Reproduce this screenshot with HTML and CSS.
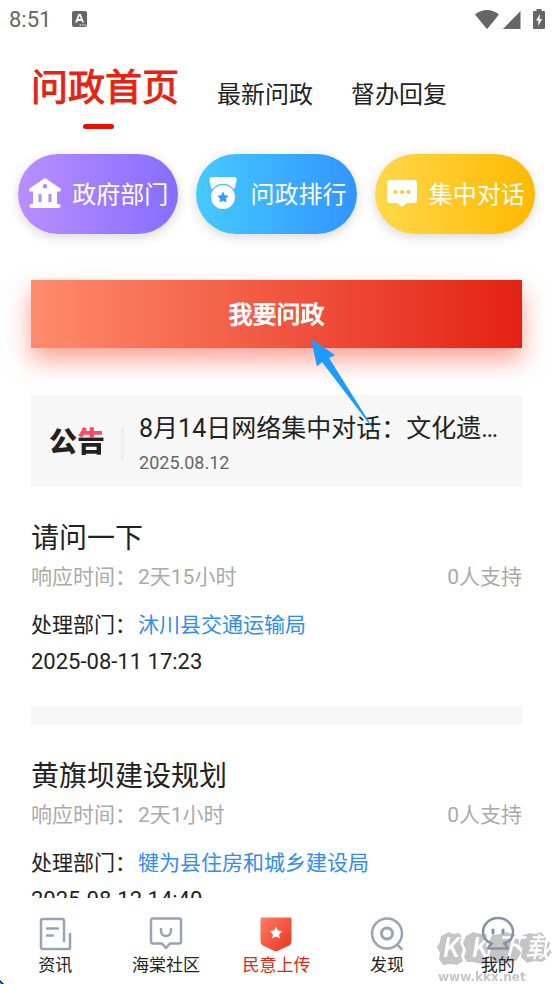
FILE: index.html
```html
<!DOCTYPE html>
<html lang="zh-CN">
<head>
<meta charset="utf-8">
<meta name="viewport" content="width=device-width, initial-scale=1">
<title>问政首页</title>
<link rel="stylesheet" href="styles.css">
</head>
<body>
<div class="app">
  <header class="status">
    <span class="clock">8:51</span>
    <svg class="status-app" width="15" height="16" viewBox="0 0 15 16"><rect width="15" height="16" rx="2" fill="#666"/><path d="M4 11.500 7 4h1.200l3 7.500M5 9h5" fill="none" stroke="#fff" stroke-width="1.800"/><path d="M7.500 14h1.500M10 14h1.500M12.500 14H14" stroke="#fff" stroke-width="1"/></svg>
    <span class="status-icons">
      <svg width="24" height="19" viewBox="0 0 24 19"><path d="M0 4.500C7-1.500 17-1.500 24 4.500L12.600 18.500Q12 19 11.400 18.500Z" fill="#666"/></svg>
      <svg width="18" height="19" viewBox="0 0 18 19"><path d="M17.500 1v18H0z" fill="#666"/></svg>
      <svg class="battery" width="12" height="20" viewBox="0 0 12 20"><path d="M3.500 0h5v2H11q1 0 1 1v16q0 1-1 1H1q-1 0-1-1V3q0-1 1-1h2.500z" fill="#666"/><path d="M7 5 3 11.500h2.500L5 17l4.200-7H6.600z" fill="#fff"/></svg>
    </span>
  </header>

  <nav class="tabs">
    <a class="tab tab-active" href="#home">问政首页</a>
    <a class="tab" href="#latest">最新问政</a>
    <a class="tab" href="#replies">督办回复</a>
  </nav>

  <main class="content">
    <div class="pills">
      <button class="pill pill-purple" type="button">
        <svg width="34" height="32" viewBox="0 0 34 32"><path fill="#fff" fill-rule="evenodd" d="M17 1 32.500 11.500Q34 13 32 14.500H29V27h2q1.500 0 1.500 2t-1.500 2H3q-1.500 0-1.500-2T3 27h2V14.500H2Q0 13 1.500 11.500ZM17 7a2.200 2.200 0 1 0 0 4.400A2.200 2.200 0 0 0 17 7ZM10.500 17v8h3v-8ZM20.500 17v8h3v-8Z"/></svg>
        <span>政府部门</span>
      </button>
      <button class="pill pill-blue" type="button">
        <svg width="34" height="34" viewBox="0 0 34 34"><path fill="#fff" d="M6 1h22q3 0 2.600 3l-1.700 7.500q-.4 1-1.400 1.500C22 6 12 6 6.500 13Q5.300 12.500 5 11.500L3.400 4Q3 1 6 1Z"/><circle cx="17" cy="21" r="12" fill="#fff"/><path fill="#359dff" d="m17 15.500 1.800 3.700 4 .6-2.900 2.800.7 4-3.600-1.900-3.600 1.900.7-4-2.900-2.800 4-.6z"/></svg>
        <span>问政排行</span>
      </button>
      <button class="pill pill-yellow" type="button">
        <svg width="34" height="30" viewBox="0 0 34 30"><path fill="#fff" d="M5 2h24q3 0 3 3v17q0 3-3 3h-7l-5 4-5-4H5q-3 0-3-3V5q0-3 3-3Z"/><g fill="#ffc925"><circle cx="10.500" cy="14" r="2"/><circle cx="17" cy="14" r="2"/><circle cx="23.500" cy="14" r="2"/></g></svg>
        <span>集中对话</span>
      </button>
    </div>

    <div class="ask">
      <button class="ask-button" type="button">我要问政</button>
      <svg class="pointer" width="66" height="96" viewBox="0 0 66 96"><path d="M0 0 24 16 18 19 65.500 94.500 11 23 6 27.500Z" fill="#1e9bff"/></svg>
    </div>

    <a class="notice" href="#notice">
      <strong class="notice-logo">公<span>告</span></strong>
      <span class="notice-body">
        <span class="notice-title">8月14日网络集中对话：文化遗产保护</span>
        <time class="notice-date">2025.08.12</time>
      </span>
    </a>

    <article class="item">
      <h2>请问一下</h2>
      <p class="meta"><span>响应时间：</span><span>2天15小时</span><span class="support">0人支持</span></p>
      <p class="dept"><span>处理部门：</span><a href="#dept1">沐川县交通运输局</a></p>
      <p class="date">2025-08-11 17:23</p>
    </article>
    <article class="item">
      <h2>黄旗坝建设规划</h2>
      <p class="meta"><span>响应时间：</span><span>2天1小时</span><span class="support">0人支持</span></p>
      <p class="dept"><span>处理部门：</span><a href="#dept2">犍为县住房和城乡建设局</a></p>
      <p class="date">2025-08-12 14:40</p>
    </article>
  </main>

  <nav class="bottom">
    <a href="#news">
      <svg width="36" height="36" viewBox="0 0 36 36" fill="none" stroke="#98a3b5" stroke-width="2.500" stroke-linecap="round" stroke-linejoin="round"><path d="M27 25V5q0-2-2-2H6Q4 3 4 5v26q0 2 2 2h26q1 0 1-1V18M10 12.500h11M10 19.500h6"/></svg>
      <span>资讯</span>
    </a>
    <a href="#community">
      <svg width="36" height="36" viewBox="0 0 36 36" fill="none" stroke="#98a3b5" stroke-width="2.500" stroke-linecap="round" stroke-linejoin="round"><path d="M5 2.500h26q2 0 2 2v21q0 2-2 2h-9L18 32l-4-4.500H5q-2 0-2-2v-21q0-2 2-2ZM13 13v2a5 5 0 0 0 10 0v-2"/></svg>
      <span>海棠社区</span>
    </a>
    <a class="current" href="#upload">
      <svg width="36" height="36" viewBox="0 0 36 36"><defs><linearGradient id="shield" x1="0" y1="0" x2="1" y2="1"><stop offset="0" stop-color="#ff7b60"/><stop offset="1" stop-color="#e73522"/></linearGradient></defs><path fill="url(#shield)" d="M4 1.500h28q1.500 0 1.500 1.500v22q0 3-2.500 4.500L19.500 35q-1.500.7-3 0L5 29.500Q2.500 28 2.500 25V3Q2.500 1.500 4 1.500Z"/><path fill="#fff" d="m18 10.500 1.900 4 4.300.6-3.100 3.100.7 4.400-3.800-2.100-3.800 2.100.7-4.400-3.100-3.100 4.300-.6z"/></svg>
      <span>民意上传</span>
    </a>
    <a href="#discover">
      <svg width="36" height="36" viewBox="0 0 36 36" fill="none" stroke="#98a3b5" stroke-width="2.500" stroke-linecap="round"><circle cx="18" cy="17.500" r="15"/><circle cx="18" cy="17.500" r="5.500" stroke-width="3"/><path d="m28.500 29 4 4"/></svg>
      <span>发现</span>
    </a>
    <a href="#me">
      <svg width="36" height="36" viewBox="0 0 36 36" fill="none" stroke="#8591a5" stroke-width="2.500" stroke-linecap="round" stroke-linejoin="round"><path d="M12 27.500C6 25.500 3 21 3 16a15 14 0 0 1 30 0c0 5-3 9.500-9 11.500q3 2 4 5H8q1-3 4-5Z"/><path d="M13 14v3M23 14v3" stroke-width="3"/></svg>
      <span>我的</span>
    </a>
  </nav>

  <div class="watermark">
    <svg class="watermark-shape" width="116" height="36" viewBox="0 0 116 36"><path fill="#777" d="M4 5 12 1l4 2 6-1 3 4-2 6 3 6-2 7 2 5-6 4-7-1-7 1-4-6 1-6-3-6 3-5ZM29 5l7-4 7 2 6 0 2 6-2 5 2 7-2 5 2 5-7 2-8-2-6 0-3-5 2-7-3-7ZM55 4l8-1 7-2 8 3 4 5-1 7 3 6-4 7-7 2-8 2-8-2-5-6 2-7-2-7ZM86 4l7-2 6 1 5-2 5 6 4 4-1 6 3 5-4 5-6 4-7-1-8 2-6-6 1-7-3-6Z"/></svg>
    <span class="watermark-name"><span>K</span><span>K</span><span>下</span><span>载</span></span>
    <span class="watermark-url">www.kkx.net</span>
  </div>
  <svg class="corner" width="4" height="4" viewBox="0 0 4 4"><path d="M0 0 4 4H0Z" fill="#111"/><path d="M0 1.500 2.500 4H0Z" fill="#1e9bff"/></svg>
</div>
</body>
</html>
```
FILE: styles.css
```css
* {
  box-sizing: border-box;
}

body {
  margin: 0;
  background: #fff;
  color: #222;
  font-family: Roboto, "Noto Sans CJK SC", sans-serif;
}

a {
  color: inherit;
  text-decoration: none;
}

button {
  border: 0;
  padding: 0 0 3px;
  color: #fff;
  font-family: inherit;
  font-size: 24px;
}

svg {
  display: block;
  flex: none;
}

.app {
  position: relative;
  display: flex;
  flex-direction: column;
  height: 100vh;
  overflow: hidden;
}

.status {
  display: flex;
  align-items: center;
  height: 38px;
  padding: 0 8px 0 9px;
  color: #666;
  font-size: 22px;
}

.status-app {
  margin-left: 21px;
}

.status-icons {
  display: flex;
  align-items: center;
  gap: 4px;
  margin-left: auto;
}

.battery {
  margin-left: 8px;
}

.tabs {
  display: flex;
  align-items: flex-start;
  gap: 38px;
  padding: 22px 31px 0;
}

.tab {
  font-size: 24px;
  line-height: 71px;
}

.tab-active {
  display: flex;
  flex-direction: column;
  color: #e42313;
  font-size: 37px;
  line-height: 58px;
  -webkit-text-stroke: 1px #e42313;
}

.tab-active::after {
  content: "";
  width: 31px;
  height: 5px;
  margin: 6px 0 0 52px;
  border-radius: 3px;
  background: #e60f00;
}

.content {
  flex: 1;
  min-height: 0;
  padding-top: 23px;
  overflow: hidden;
}

.pills {
  display: grid;
  grid-template-columns: repeat(3, 1fr);
  gap: 18px;
  padding: 0 18px;
}

.pill {
  display: flex;
  align-items: center;
  justify-content: center;
  gap: 10px;
  height: 80px;
  border-radius: 40px;
  box-shadow: 0 3px 12px rgba(0, 0, 0, 0.16);
}

.pill-purple {
  background: linear-gradient(90deg, #b98fff, #866dff);
}

.pill-blue {
  background: linear-gradient(90deg, #45caff, #3294ff);
}

.pill-yellow {
  background: linear-gradient(90deg, #ffd84a, #ffb900);
}

.ask {
  position: relative;
  margin: 46px 31px 0;
}

.ask-button {
  display: block;
  width: 100%;
  height: 68px;
  background: linear-gradient(90deg, #ff8b6d, #e32214);
  box-shadow: 0 12px 24px rgba(246, 70, 45, 0.5);
  -webkit-text-stroke: 1px #fff;
}

.pointer {
  position: absolute;
  left: 57%;
  top: 59px;
  z-index: 1;
}

.notice {
  display: flex;
  align-items: center;
  height: 92px;
  margin: 47px 31px 0;
  padding: 3px 18px 0;
  background: #f7f7f7;
}

.notice-logo {
  padding-right: 16px;
  border-right: 3px solid #eee;
  font-size: 28px;
  font-weight: 900;
  line-height: 32px;
}

.notice-logo span {
  background: linear-gradient(#ff4a68 12px, #222 12px);
  background-clip: text;
  -webkit-background-clip: text;
  color: transparent;
}

.notice-body {
  flex: 1;
  min-width: 0;
  margin-left: 15px;
}

.notice-title {
  display: block;
  overflow: hidden;
  padding-top: 5px;
  font-size: 25px;
  line-height: 36px;
  text-overflow: ellipsis;
  white-space: nowrap;
}

.notice-date {
  display: block;
  color: #666;
  font-size: 18px;
  line-height: 32px;
}

.item {
  margin: 0 31px;
  padding: 32px 0 28px;
  border-bottom: 19px solid #f7f7f7;
}

h2,
p {
  margin: 0;
}

h2 {
  font-size: 28px;
  font-weight: 400;
  line-height: 40px;
}

p {
  font-size: 21px;
  line-height: 32px;
}

.meta,
.dept {
  display: flex;
  gap: 2px;
}

.meta {
  margin-top: 2px;
  color: #aaa;
}

.support {
  margin-left: auto;
}

.dept {
  margin-top: 16px;
}

.dept a {
  color: #318bf5;
}

.date {
  margin-top: 5px;
  font-size: 22px;
}

.bottom {
  position: relative;
  z-index: 1;
  display: flex;
  height: 86px;
  padding-top: 18px;
}

.bottom a {
  display: flex;
  flex: 1;
  flex-direction: column;
  align-items: center;
  font-size: 17px;
  line-height: 26px;
}

.bottom .current {
  color: #e42313;
}

.watermark {
  position: absolute;
  right: 0;
  bottom: 0;
  width: 116px;
  height: 53px;
  opacity: 0.42;
  pointer-events: none;
}

.watermark-name {
  position: absolute;
  left: 0;
  top: 0;
  display: grid;
  grid-template-columns: repeat(4, 1fr);
  width: 100%;
  color: #fff;
  font-size: 27px;
  font-style: italic;
  font-weight: 500;
  line-height: 34px;
  text-align: center;
}

.watermark-url {
  position: absolute;
  left: 1px;
  bottom: 0;
  color: #777;
  font-family: "DejaVu Sans", sans-serif;
  font-size: 12px;
  font-weight: 700;
  line-height: 14px;
}

.corner {
  position: absolute;
  left: 0;
  bottom: 0;
}
```
